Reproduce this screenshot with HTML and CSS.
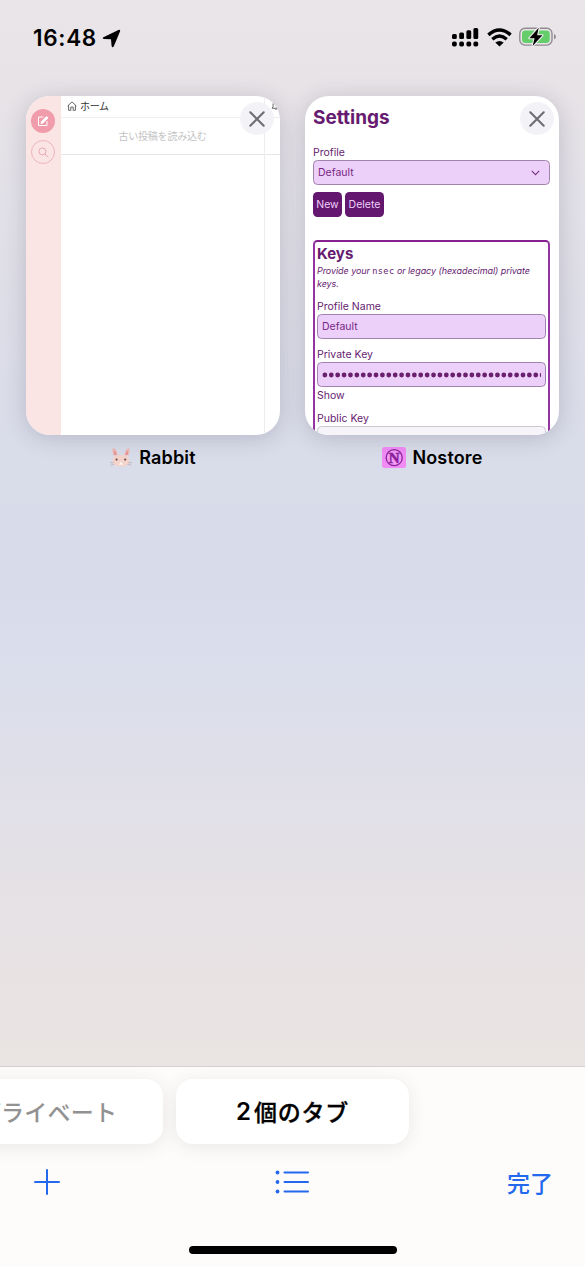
FILE: index.html
```html
<!DOCTYPE html>
<html lang="ja">
<head>
<meta charset="utf-8">
<title>Tabs</title>
<link rel="stylesheet" href="styles.css">
</head>
<body>
<div class="screen">
  <header class="status">
    <div class="clock"><span class="time">16:48</span>
      <svg width="19" height="19" viewBox="0 0 19 19"><path d="M1.4 8.2 16.4.9Q18.7.2 18 2.4L11.8 17.2Q10.4 19.4 9.6 17L9 10.3 1.9 10.1Q-.3 9.3 1.4 8.2Z"/></svg>
    </div>
    <div class="indicators">
      <svg width="27" height="19" viewBox="0 0 27 19"><g><rect x="0" y="6" width="4.8" height="5" rx="1.5"/><rect x="7.2" y="4.4" width="4.8" height="6.6" rx="1.5"/><rect x="14.4" y="2.3" width="4.8" height="8.7" rx="1.5"/><rect x="21.4" y="0" width="4.8" height="11" rx="1.5"/><rect x="0" y="13.6" width="4.8" height="5" rx="1.8"/><rect x="7.2" y="13.6" width="4.8" height="5" rx="1.8"/><rect x="14.4" y="13.6" width="4.8" height="5" rx="1.8"/><rect x="21.4" y="13.6" width="4.8" height="5" rx="1.8"/></g></svg>
      <svg width="25" height="19" viewBox="0 0 25 19"><g fill="none" stroke="#000" stroke-width="3.4"><path d="M1.4 6.9Q12.5-2.8 23.6 6.9"/><path d="M5.3 11.2Q12.5 4.8 19.7 11.2"/></g><path d="M8.3 14.6Q12.5 11.2 16.7 14.6L12.5 18.6Z"/></svg>
      <svg width="38" height="20" viewBox="0 0 38 20"><rect x=".8" y="1.3" width="32.2" height="16.8" rx="5.2" fill="none" stroke="#918c92" stroke-width="1.4"/><rect x="3" y="3.4" width="27.8" height="12.6" rx="3.4" fill="#65ce6b"/><path d="M35 6.8Q39 9.7 35 12.6Z" fill="#918c92"/><path d="M19.7.8 10.4 11.2H15.6L13.6 18.9 23.4 8.3H18.1Z" stroke="#f1edf0" stroke-width="2.2" paint-order="stroke" stroke-linejoin="round"/></svg>
    </div>
  </header>

  <main class="tabs">
    <section class="tab">
      <div class="card rabbit">
        <aside class="rail">
          <div class="round compose"><svg width="12" height="12" viewBox="0 0 12 12" fill="none" stroke="#fff" stroke-width="1"><path d="M6.4 2H1.5v8.5H10V6"/><path d="M4.3 6.8 9.6 1.5 11 2.9 5.7 8.1 4 8.4Z" fill="#fff"/></svg></div>
          <div class="round search"><svg width="11" height="11" viewBox="0 0 11 11" fill="none" stroke="#e7a4ac" stroke-width=".9"><circle cx="4.4" cy="4.4" r="3.5"/><path d="m7 7 3.4 3.4"/></svg></div>
        </aside>
        <div class="column">
          <div class="column-head"><svg width="10" height="10" viewBox="0 0 10 10" fill="none" stroke="#555" stroke-width=".9"><path d="M.6 5 5 .9 9.4 5M1.6 4.2v5.1h2.2V6.1h2.4v3.2h2.2V4.2"/></svg><span>ホーム</span><i class="dots">⋮</i></div>
          <div class="load">古い投稿を読み込む</div>
        </div>
        <div class="column next">
          <div class="column-head"><svg width="10" height="11" viewBox="0 0 10 11" fill="none" stroke="#555" stroke-width=".9"><path d="M1 8.2 2.1 6.6V4Q2.5 1.2 5 1.2T7.9 4v2.6L9 8.2ZM4 8.4Q5 10.8 6 8.4"/></svg></div>
          <div class="load"></div>
        </div>
        <div class="close"><svg width="16" height="16" viewBox="0 0 16 16"><path d="m1.3 1.3 13.4 13.4m0-13.4L1.3 14.7"/></svg></div>
      </div>
      <div class="caption">
        <svg width="24" height="24" viewBox="0 0 24 24"><path d="M4.4 10.2C3 6 3.2 2.4 4.9 3.3 7 4.3 8.2 7 8.6 10.6ZM19.6 10.2C21 6 20.8 2.4 19.1 3.3 17 4.3 15.8 7 15.4 10.6Z" fill="#f1b9b3"/><path d="M5.6 10C4.9 7 5 5.7 5.5 5.8 6.7 6.8 7.3 8.4 7.5 10ZM18.4 10C19.1 7 19 5.7 18.5 5.8 17.3 6.8 16.7 8.4 16.5 10Z" fill="#e58f91"/><path d="M12 10.3C6.4 9.4 3.6 12 3.8 16.3 4.1 20 7 21.5 12 21.5S19.9 20 20.2 16.3C20.4 12 17.6 9.4 12 10.3Z" fill="#f4d3cb"/><circle cx="7.6" cy="14.6" r="1.1" fill="#654e52"/><circle cx="16.2" cy="14.6" r="1.1" fill="#654e52"/><path d="M12 17.2v1.6M10.4 19.4 12 18.4l1.6 1" fill="none" stroke="#fff" stroke-width="1.2"/><path d="M1 17.7h4M1.5 20.2l4-1M23 17.7h-4M22.5 20.2l-4-1" stroke="#b9a4a8" stroke-width=".6"/></svg>
        <span>Rabbit</span>
      </div>
    </section>

    <section class="tab">
      <div class="card nostore">
        <h1>Settings</h1>
        <div class="label">Profile</div>
        <div class="field select"><span>Default</span><svg width="9" height="6" viewBox="0 0 9 6" fill="none" stroke="#783185" stroke-width="1.1"><path d="m.8.8 3.7 3.8L8.2.8"/></svg></div>
        <div class="buttons"><span class="btn new">New</span><span class="btn delete">Delete</span></div>
        <div class="keys">
          <h2>Keys</h2>
          <p>Provide your <code>nsec</code> or legacy (hexadecimal) private keys.</p>
          <div class="label">Profile Name</div>
          <div class="field">Default</div>
          <div class="label gap">Private Key</div>
          <div class="field secret"><svg width="219" height="8" viewBox="0 0 219 8"><path d="M2.9 4H224" fill="none" stroke="#69206f" stroke-width="4.8" stroke-linecap="round" stroke-dasharray="0 6.39"/></svg></div>
          <div class="label show">Show</div>
          <div class="label public">Public Key</div>
          <div class="field readonly"></div>
        </div>
        <div class="close"><svg width="16" height="16" viewBox="0 0 16 16"><path d="m1.3 1.3 13.4 13.4m0-13.4L1.3 14.7"/></svg></div>
      </div>
      <div class="caption wide">
        <svg width="24" height="21" viewBox="0 0 24 21"><rect width="24" height="21" rx="2.5" fill="#f18cf5"/><circle cx="12.2" cy="10.7" r="8" fill="#f39bf6" stroke="#8b229c" stroke-width="1.3"/><text x="12.2" y="15.8" class="mark">N</text></svg>
        <span>Nostore</span>
      </div>
    </section>
  </main>

  <footer class="bar">
    <div class="groups"><div class="group private">プライベート</div><div class="group current"><span class="num">2</span><span class="count">個のタブ</span></div></div>
    <nav class="actions">
      <div class="action"><svg width="26" height="26" viewBox="0 0 26 26"><path d="M13 1v24M1 13h24"/></svg></div>
      <svg width="34" height="24" viewBox="0 0 34 24"><path d="M9.5 2.5h23.5M9.5 12h23.5M9.5 21.5h23.5"/><g class="bullets"><circle cx="2.5" cy="2.5" r="1.9"/><circle cx="2.5" cy="12" r="1.9"/><circle cx="2.5" cy="21.5" r="1.9"/></g></svg>
      <div class="action done">完了</div>
    </nav>
    <div class="home"></div>
  </footer>
</div>
</body>
</html>
```
FILE: styles.css
```css
* { box-sizing: border-box; }
body { margin: 0; font-family: Inter, "Noto Sans CJK JP", sans-serif; }
svg { display: block; flex: none; }
.screen {
  width: 585px; height: 1266px; overflow: hidden;
  display: flex; flex-direction: column;
  background: linear-gradient(#eae5e8 0, #e7e3e7 90px, #dedee8 300px, #d9dce9 450px, #d8dbe9 580px, #dadeec 650px, #dfdfe9 760px, #e4e1e6 860px, #e8e2e3 980px, #eae4e3 1066px);
}
.status { height: 96px; flex: none; display: flex; justify-content: space-between; padding: 27px 28px 0 33px; }
.clock { display: flex; height: 22px; align-items: center; gap: 5px; }
.time { font-size: 22.5px; font-weight: 600; line-height: 22px; letter-spacing: .7px; }
.indicators { display: flex; height: 20px; align-items: center; gap: 7.5px; }
.tabs { flex: 1; display: grid; grid-template-columns: 254px 254px; column-gap: 25px; padding-left: 26px; align-content: start; }
.card {
  position: relative; height: 339px; border-radius: 24px; overflow: hidden; background: #fff;
  box-shadow: 0 3px 22px rgba(65, 60, 85, .22);
}
.rabbit { display: flex; }
.rail { width: 35px; background: #fae4e4; padding: 12.5px 0 0 5px; display: flex; flex-direction: column; gap: 7.5px; flex: none; }
.round { width: 24px; height: 24px; border-radius: 50%; display: flex; align-items: center; justify-content: center; }
.compose { background: #f09caa; }
.search { border: 1px solid #edb5bc; }
.column { width: 204px; flex: none; border-right: 1px solid #ededed; }
.column-head { height: 22px; display: flex; align-items: center; gap: 3px; padding: 0 0 2px 6px; font-size: 10px; line-height: 18px; color: #333; border-bottom: 1px solid #eee; }
.column-head span { letter-spacing: -.3px; }
.dots { margin-left: auto; padding-right: 6px; font-style: normal; color: #bbb; }
.load { height: 37px; line-height: 36px; text-align: center; font-size: 10px; color: #c3c3c3; border-bottom: 1px solid #e6e6e6; letter-spacing: -.2px; }
.next { width: 70px; border: 0; }
.close {
  position: absolute; right: 6px; top: 6px; width: 34px; height: 33px; border-radius: 50%;
  background: #f3f2f7; display: flex; align-items: center; justify-content: center;
}
.nostore .close { right: 5px; }
.close path { stroke: #6f6e74; stroke-width: 2.1; stroke-linecap: round; }
.caption { display: flex; justify-content: center; align-items: center; height: 24px; margin-top: 10px; gap: 6px; font-size: 18px; font-weight: 600; padding-right: 1px; letter-spacing: .15px; }
.wide { padding: 0 0 0 1px; }
.mark { font: bold 15px "Liberation Serif", serif; fill: #8b229c; stroke: #8b229c; stroke-width: .5; text-anchor: middle; letter-spacing: 0; }

.nostore { padding: 0 9px 0 8px; color: #661b70; font-size: 10.5px; }
h1 { margin: 9px 0 0; font-size: 19px; line-height: 25px; font-weight: 700; letter-spacing: 0; }
.label { height: 14px; line-height: 14px; }
h1 + .label { margin-top: 16px; }
.field {
  height: 25px; border: 1px solid #a184ad; border-radius: 4.5px; background: #edd0fa; color: #782782;
  padding: 0 4px; line-height: 23px; display: flex; align-items: center; overflow: hidden;
}
.select { justify-content: space-between; padding-right: 9px; }
.buttons { display: flex; gap: 3px; margin: 7px 0 23.5px; }
.btn { height: 24.5px; border-radius: 4.5px; background: #63176e; color: #edd0fa; line-height: 25px; text-align: center; }
.new { width: 29px; }
.delete { width: 39px; }
.keys { height: 210px; border: 2px solid #9434a2; border-top-color: #84208f; border-radius: 4.5px; padding: 3px 2px 0; }
h2 { margin: 0; font-size: 15px; line-height: 18px; font-weight: 700; letter-spacing: 0; }
p { margin: 1px 0 10px; font-size: 9px; line-height: 13px; font-style: italic; letter-spacing: -.07px; }
code { font: normal 8.6px/9px "DejaVu Sans Mono", monospace; letter-spacing: .35px; }
.gap { margin-top: 9px; }
.secret svg { width: 219px; }
.show { margin-top: 2px; }
.public { margin-top: 9px; }
.readonly { background: #f6f4f8; border-color: #cbc8d0; }

.bar { height: 200px; flex: none; border-top: 1px solid #d5d1d1; background: #fdfcfb; display: flex; flex-direction: column; }
.groups { display: flex; gap: 13px; margin: 12px 0 0 -70px; }
.group { width: 233px; height: 65px; border-radius: 17px; background: #fff; box-shadow: 0 3px 18px rgba(70, 60, 55, .1); flex: none; display: flex; align-items: center; justify-content: center; font-size: 23px; font-weight: 500; padding-bottom: 2px; }
.private { color: #929292; letter-spacing: .3px; padding-left: 2px; }
.num { margin: 2px 3px 0 0; font-size: 24px; font-weight: 600; line-height: 30px; }
.count { letter-spacing: .8px; font-weight: 500; -webkit-text-stroke: .3px #000; }
.actions { display: flex; align-items: center; justify-content: space-between; height: 34px; margin: 21px 32px 0 34px; color: #2468ee; font-size: 23px; font-weight: 500; }
.action { width: 60px; }
.action:first-child { width: 57px; }
.done { text-align: right; padding-bottom: 1px; }
.actions path { stroke: #2468ee; stroke-width: 2; stroke-linecap: round; fill: none; }
.bullets { fill: #2468ee; }
.home { width: 208px; height: 8px; border-radius: 4px; background: #000; margin: 47px auto 0 189px; }
```
